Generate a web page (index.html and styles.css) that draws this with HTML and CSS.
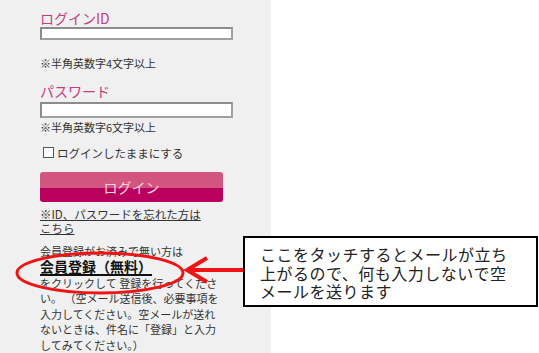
FILE: index.html
```html
<!DOCTYPE html>
<html lang="ja">
<head>
<meta charset="utf-8">
<link rel="stylesheet" href="styles.css">
</head>
<body>
<div class="page">
  <div class="panel">
    <div class="label">ログインID</div>
    <div class="input small"></div>
    <div class="note n1">※半角英数字4文字以上</div>
    <div class="label l2">パスワード</div>
    <div class="input tall"></div>
    <div class="note n2">※半角英数字6文字以上</div>
    <div class="check"><span class="box"></span><span>ログインしたままにする</span></div>
    <div class="btn">ログイン</div>
    <div class="forgot"><span class="u">※ID、パスワードを忘れた方は</span><br><span class="u">こちら</span></div>
    <div class="reg-lead">会員登録がお済みで無い方は</div>
    <div class="reg-link">会員登録（無料）</div>
    <div class="reg-body">をクリックして 登録を行ってくださ<br>い。 （空メール送信後、必要事項を<br>入力してください。空メールが送れ<br>ないときは、件名に「登録」と入力<br>してみてください。）</div>
  </div>
  <div class="rest"></div>
  <svg class="marks" width="539" height="353" viewBox="0 0 539 353">
    <ellipse cx="100" cy="273" rx="83" ry="20" fill="none" stroke="#f01414" stroke-width="3"/>
    <line x1="188" y1="270" x2="244" y2="270" stroke="#f01414" stroke-width="4"/>
    <polyline points="207,258 187,270 207,282" fill="none" stroke="#f01414" stroke-width="4" stroke-linejoin="miter"/>
  </svg>
  <div class="callout">ここをタッチするとメールが立ち<br>上がるので、何も入力しないで空<br>メールを送ります</div>
</div>
</body>
</html>
```
FILE: styles.css
```css
html, body {
  margin: 0;
  padding: 0;
  background: #ffffff;
}
.page {
  position: relative;
  width: 539px;
  height: 353px;
  overflow: hidden;
  display: flex;
  font-family: "Noto Sans CJK JP", "Noto Sans", sans-serif;
  color: #333333;
}
.panel {
  width: 271px;
  height: 353px;
  box-sizing: border-box;
  background: #f0f0f0;
  padding: 10px 0 0 40px;
  display: flex;
  flex-direction: column;
  align-items: flex-start;
}
.rest {
  flex: 1;
}
.label {
  font-size: 14px;
  line-height: 16px;
  color: #c33c82;
}
.l2 {
  margin-top: 13px;
}
.input {
  width: 193px;
  box-sizing: border-box;
  background: #ffffff;
  border: 2px solid #8c8c8c;
  border-right-color: #a0a0a0;
  border-bottom-color: #a0a0a0;
}
.small {
  height: 15px;
  margin-top: 1px;
}
.tall {
  height: 17px;
  margin-top: 3px;
}
.note {
  font-size: 11px;
  line-height: 13px;
  color: #333333;
}
.n1 {
  margin-top: 17px;
}
.n2 {
  margin-top: 3px;
}
.check {
  margin-top: 12px;
  margin-left: 3px;
  display: flex;
  align-items: center;
  font-size: 11.5px;
  line-height: 14px;
  color: #333333;
}
.check .box {
  width: 11px;
  height: 11px;
  box-sizing: border-box;
  border: 1.5px solid #555555;
  background: #ffffff;
  margin-right: 3px;
}
.btn {
  margin-top: 12px;
  width: 183px;
  height: 30px;
  border-radius: 3px;
  background: linear-gradient(#d2557f 0, #d2557f 55%, #b8005c 55%, #b8005c 100%);
  color: #f6d3e2;
  font-size: 14px;
  line-height: 30px;
  text-align: center;
}
.forgot {
  margin-top: 5px;
  font-size: 11.5px;
  line-height: 14px;
  color: #333333;
}
.u {
  text-decoration: underline;
}
.reg-lead {
  margin-top: 10px;
  font-size: 11px;
  line-height: 13px;
  color: #333333;
}
.reg-link {
  font-size: 14px;
  line-height: 16px;
  font-weight: bold;
  color: #111111;
  text-decoration: underline;
  text-decoration-thickness: 1.5px;
  text-underline-offset: 2px;
}
.reg-body {
  margin-top: 2px;
  font-size: 11px;
  line-height: 15.5px;
  color: #333333;
  white-space: nowrap;
}
.marks {
  position: absolute;
  left: 0;
  top: 0;
  pointer-events: none;
}
.callout {
  position: absolute;
  left: 243px;
  top: 236px;
  width: 295px;
  height: 71px;
  box-sizing: border-box;
  border: 2px solid #000000;
  background: #ffffff;
  padding: 7px 0 0 15px;
  font-size: 16px;
  line-height: 18.5px;
  letter-spacing: 0.5px;
  color: #222222;
  white-space: nowrap;
}
```
